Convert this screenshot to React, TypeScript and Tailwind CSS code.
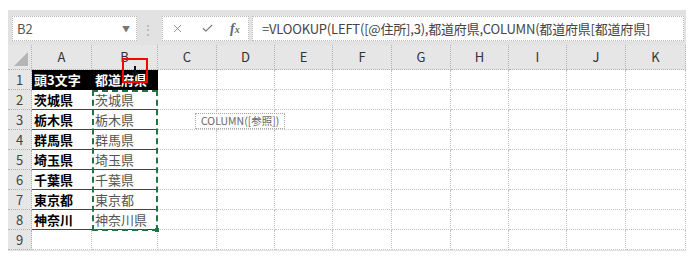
import React from 'react';
import { X, Check } from 'lucide-react';

const colWidths = ['A', 'B', 'C', 'D', 'E', 'F', 'G', 'H', 'I', 'J', 'K'];

const rows: [string, string][] = [
  ['茨城県', '茨城県'],
  ['栃木県', '栃木県'],
  ['群馬県', '群馬県'],
  ['埼玉県', '埼玉県'],
  ['千葉県', '千葉県'],
  ['東京都', '東京都'],
  ['神奈川', '神奈川県'],
];

const font = { fontFamily: '"Noto Sans CJK JP", "Liberation Sans", sans-serif' };

function EmptyCells({ from }: { from: number }) {
  return (
    <>
      {colWidths.slice(from).map((c) => (
        <div key={c} className="bg-white border-r border-b border-dotted border-[#c4c4c4]" />
      ))}
    </>
  );
}

export default function App() {
  return (
    <div className="w-[698px] h-[258px] bg-white pl-[8px] pt-[10px] overflow-hidden" style={font}>
      <div className="w-[678px] h-[241px] bg-[#e2e2e2] flex flex-col">
        {/* Formula bar */}
        <div className="flex items-center h-[25px] mt-[6px] mb-[4px]">
          <div className="ml-[4px] w-[125px] h-full bg-white border border-dotted border-[#b8b8b8] flex items-center justify-between pl-[4px] pr-[6px]">
            <span className="text-[13px] text-[#555]">B2</span>
            <span className="text-[8px] text-[#777]">▼</span>
          </div>
          <div className="w-[22px] flex justify-center text-[12px] text-[#aaa]">⋮</div>
          <div className="ml-[3px] w-[87px] h-full bg-white border border-dotted border-[#b8b8b8] flex items-center justify-around">
            <X className="w-[13px] h-[13px] text-[#777]" strokeWidth={1.5} />
            <Check className="w-[13px] h-[13px] text-[#777]" strokeWidth={2} />
            <span className="text-[14px] italic font-bold text-[#666]" style={{ fontFamily: '"Liberation Serif", serif' }}>
              f<span className="text-[10px]">x</span>
            </span>
          </div>
          <div className="ml-[3px] w-[432px] h-full bg-white border border-dotted border-[#b8b8b8] flex items-center pl-[9px] overflow-hidden whitespace-nowrap">
            <span className="text-[13px] text-[#444] tracking-[-0.2px]">
              =VLOOKUP(LEFT([@住所],3),都道府県,COLUMN(都道府県[都道府県]
            </span>
          </div>
        </div>

        {/* Sheet grid */}
        <div className="relative grid grid-cols-[24px_60px_66px_59px_58px_58px_59px_59px_58px_58px_59px_60px] grid-rows-[25px_repeat(9,20px)]">
          <div className="bg-[#e6e6e6] border-r border-b border-dotted border-[#b0b0b0] flex items-end justify-end p-[3px]">
            <svg width="14" height="14" viewBox="0 0 14 14">
              <polygon points="14,0 14,14 0,14" fill="#b5b5b5" />
            </svg>
          </div>
          {colWidths.map((c) => (
            <div
              key={c}
              className="bg-[#e6e6e6] border-r border-b border-dotted border-[#b0b0b0] flex items-center justify-center text-[13px] text-[#333]"
            >
              {c}
            </div>
          ))}

          {/* Row 1 */}
          <div className="bg-[#e6e6e6] border-r border-b border-dotted border-[#b0b0b0] flex items-center justify-center text-[13px] text-[#444]">1</div>
          <div className="bg-black text-white font-bold text-[13px] flex items-center pl-[2px]">頭3文字</div>
          <div className="bg-black text-white font-bold text-[13px] flex items-center pl-[3px]">都道府県</div>
          <EmptyCells from={2} />

          {rows.map(([a, b], i) => (
            <React.Fragment key={i}>
              <div className="bg-[#e6e6e6] border-r border-b border-dotted border-[#b0b0b0] flex items-center justify-center text-[13px] text-[#444]">
                {i + 2}
              </div>
              <div className="bg-white border-b border-solid border-[#444] flex items-center pl-[2px] text-[13px] font-bold text-black">{a}</div>
              <div className="bg-white border-b border-solid border-[#444] flex items-center pl-[3px] text-[13px] text-[#555]">{b}</div>
              <EmptyCells from={2} />
            </React.Fragment>
          ))}

          {/* Row 9 */}
          <div className="bg-[#e6e6e6] border-r border-b border-dotted border-[#b0b0b0] flex items-center justify-center text-[13px] text-[#444]">9</div>
          <EmptyCells from={0} />

          {/* Copy marquee around B2:B8 */}
          <div className="absolute left-[84px] top-[45px] w-[66px] h-[141px] border-2 border-dashed border-[#217346] pointer-events-none" />
          <div className="absolute left-[147px] top-[183px] w-[4px] h-[4px] bg-[#217346]" />

          {/* Cursor highlight */}
          <div className="absolute left-[114px] top-[13px] w-[26px] h-[25px] border-2 border-[#ff0000] flex justify-center pointer-events-none">
            <svg width="8" height="11" viewBox="0 0 8 11" className="mt-[6px]">
              <rect x="3" y="0" width="2" height="7" fill="#111" />
              <polygon points="0,6 8,6 4,11" fill="#111" />
            </svg>
          </div>

          {/* Function tooltip */}
          <div className="absolute left-[187px] top-[68px] h-[16px] px-[5px] bg-white border border-dotted border-[#a8a8a8] flex items-center text-[10.5px] text-[#666] whitespace-nowrap">
            COLUMN([参照])
          </div>
        </div>
      </div>
    </div>
  );
}
